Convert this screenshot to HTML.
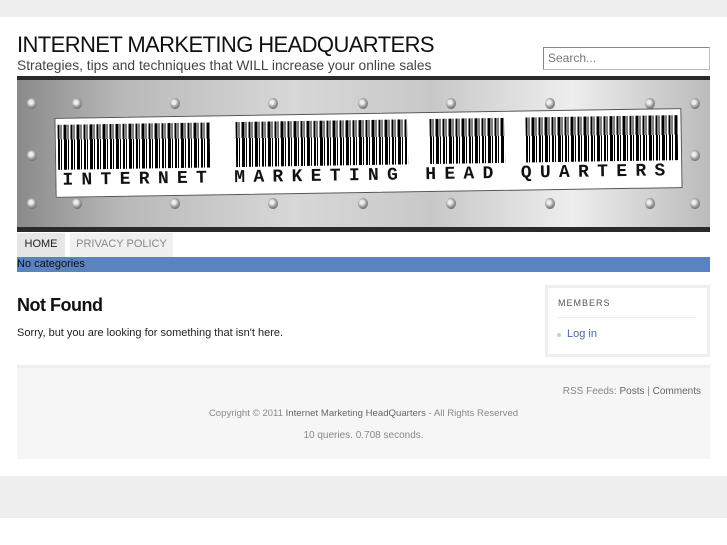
<!DOCTYPE html>
<html><head><style>
body{margin:0;width:727px;height:545px;background:#fff;font-family:"Liberation Sans",sans-serif;position:relative;overflow:hidden}
.a{position:absolute}
.bars{background:repeating-linear-gradient(90deg,#000 0 2px,#fff 2px 3px,#000 3px 4px,#fff 4px 6px,#000 6px 9px,#fff 9px 10px,#000 10px 11px,#fff 11px 13px)}
.bolt{position:absolute;width:10px;height:11px;border-radius:50%;background:radial-gradient(circle at 40% 40%,#eee 0 20%,#999 50%,#666 80%)}
</style></head><body>
<div class="a" style="left:0;top:0;width:727px;height:17px;background:#eee"></div>
<div class="a" style="left:17px;top:32px;font-size:22px;color:#111;letter-spacing:-0.6px">INTERNET MARKETING HEADQUARTERS</div>
<div class="a" style="left:17px;top:58px;font-size:13.8px;color:#444">Strategies, tips and techniques that WILL increase your online sales</div>
<div class="a" style="left:543px;top:47px;border:1px solid #bbb;border-top-color:#888;border-left-color:#888;font-size:12px;color:#777;line-height:21px;padding-left:4px;box-sizing:border-box;width:167px;height:23px">Search...</div>
<div class="a" style="left:17px;top:76px;width:693px;height:156px;background:#2a2a2a"></div>
<div class="a" style="left:17px;top:80px;width:693px;height:147px;background:linear-gradient(90deg,#8a8a8a,#b8b8b8 15%,#d8d8d8 40%,#c8c8c8 60%,#eee 80%,#bbb)"></div>
<div class="bolt" style="left:27px;top:98px"></div><div class="bolt" style="left:72px;top:98px"></div><div class="bolt" style="left:170px;top:98px"></div><div class="bolt" style="left:268px;top:98px"></div><div class="bolt" style="left:358px;top:98px"></div><div class="bolt" style="left:446px;top:98px"></div><div class="bolt" style="left:545px;top:98px"></div><div class="bolt" style="left:645px;top:98px"></div><div class="bolt" style="left:690px;top:98px"></div>
<div class="bolt" style="left:27px;top:150px"></div><div class="bolt" style="left:690px;top:150px"></div>
<div class="bolt" style="left:27px;top:198px"></div><div class="bolt" style="left:72px;top:198px"></div><div class="bolt" style="left:170px;top:198px"></div><div class="bolt" style="left:268px;top:198px"></div><div class="bolt" style="left:358px;top:198px"></div><div class="bolt" style="left:446px;top:198px"></div><div class="bolt" style="left:545px;top:198px"></div><div class="bolt" style="left:645px;top:198px"></div><div class="bolt" style="left:690px;top:198px"></div>
<div class="a" style="left:55px;top:113px;width:625px;height:78px;background:#fff;transform:rotate(-0.9deg);border:1px solid #555;overflow:hidden">
 <div class="a bars" style="left:2px;top:6px;width:152px;height:45px"></div>
 <div class="a bars" style="left:180px;top:6px;width:172px;height:45px"></div>
 <div class="a bars" style="left:374px;top:6px;width:75px;height:45px"></div>
 <div class="a bars" style="left:470px;top:6px;width:152px;height:45px"></div>
 <div class="a" style="left:6px;top:52px;font-family:'Liberation Mono',monospace;font-weight:bold;font-size:18px;letter-spacing:8.3px;color:#111;white-space:nowrap">INTERNET MARKETING HEAD QUARTERS</div>
</div>
<div class="a" style="left:17px;top:233px;width:48px;height:24px;background:#e6e6e6;font-size:11px;color:#222;text-align:center;line-height:22px">HOME</div>
<div class="a" style="left:70px;top:233px;width:103px;height:24px;background:#f0f0f0;font-size:11px;color:#888;text-align:center;line-height:22px">PRIVACY POLICY</div>
<div class="a" style="left:17px;top:257px;width:693px;height:15px;background:#5b83c0;font-size:11px;color:#111;line-height:15px">No categories</div>
<div class="a" style="left:17px;top:295px;font-size:18px;font-weight:bold;color:#111;letter-spacing:-0.5px">Not Found</div>
<div class="a" style="left:17px;top:327px;font-size:11px;color:#222">Sorry, but you are looking for something that isn't here.</div>
<div class="a" style="left:545px;top:285px;width:165px;height:72px;border:3px solid #eee;box-sizing:border-box"></div>
<div class="a" style="left:558px;top:298px;font-size:9px;color:#555;letter-spacing:1px">MEMBERS</div>
<div class="a" style="left:557px;top:317px;width:140px;height:1px;background:#eee"></div>
<div class="a" style="left:557px;top:333px;width:4px;height:4px;border-radius:50%;background:#ccc"></div>
<div class="a" style="left:567px;top:328px;font-size:11px;color:#4a6aa8">Log in</div>
<div class="a" style="left:17px;top:365px;width:693px;height:3px;background:#eee"></div>
<div class="a" style="left:17px;top:368px;width:693px;height:91px;background:#f6f6f6"></div>
<div class="a" style="left:500px;top:386px;width:201px;text-align:right;font-size:10px;color:#888">RSS Feeds: <span style="color:#666">Posts</span> | <span style="color:#666">Comments</span></div>
<div class="a" style="left:17px;top:408px;text-align:center;font-size:9.6px;color:#888;width:693px">Copyright © 2011 <span style="color:#666">Internet Marketing HeadQuarters</span> - All Rights Reserved</div>
<div class="a" style="left:17px;top:430px;width:693px;text-align:center;font-size:10px;color:#888">10 queries. 0.708 seconds.</div>
<div class="a" style="left:0;top:476px;width:727px;height:42px;background:#eee"></div>
</body></html>
